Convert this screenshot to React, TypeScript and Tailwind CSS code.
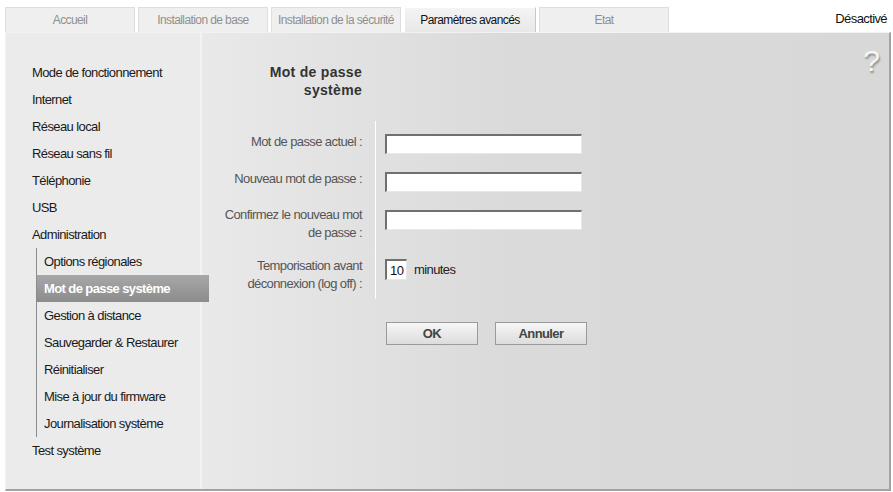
import React from 'react';

const tabs = [
  { label: 'Accueil', active: false },
  { label: 'Installation de base', active: false },
  { label: 'Installation de la sécurité', active: false },
  { label: 'Paramètres avancés', active: true },
  { label: 'Etat', active: false },
];

const mainMenu = [
  'Mode de fonctionnement',
  'Internet',
  'Réseau local',
  'Réseau sans fil',
  'Téléphonie',
  'USB',
  'Administration',
];

const adminMenu = [
  'Options régionales',
  'Mot de passe système',
  'Gestion à distance',
  'Sauvegarder & Restaurer',
  'Réinitialiser',
  'Mise à jour du firmware',
  'Journalisation système',
];

function PasswordField() {
  return (
    <input
      type="password"
      className="w-[197px] h-[20px] bg-white border-t-2 border-l-2 border-r border-b border-t-[#707070] border-l-[#707070] border-r-[#e8e8e8] border-b-[#e8e8e8] outline-none"
    />
  );
}

export default function App() {
  const current = 'Mot de passe système';

  return (
    <div className="w-[893px] h-[492px] bg-white overflow-hidden font-['Liberation_Sans',sans-serif] text-[13px] tracking-[-0.6px] whitespace-nowrap">
      {/* onglets */}
      <div className="flex items-end h-[32px] pl-[5px]">
        <div className="flex gap-[3px]">
          {tabs.map((t) =>
            t.active ? (
              <div
                key={t.label}
                className="w-[132px] h-[25px] flex items-center justify-center bg-gradient-to-b from-[#f4f4f4] to-[#e8e8e8] border-t border-l border-white border-r border-r-[#c8c8c8] text-[12px] text-[#111]"
              >
                {t.label}
              </div>
            ) : (
              <div
                key={t.label}
                className="w-[130px] h-[25px] flex items-center justify-center bg-[#efefef] border border-b-0 border-[#dedede] text-[12px] text-[#8f8f8f]"
              >
                {t.label}
              </div>
            )
          )}
        </div>
        <div className="ml-auto self-start pt-[9px] pr-[6px] text-[#111]">Désactivé</div>
      </div>

      {/* panneau principal */}
      <div className="ml-[5px] w-[886px] h-[459px] flex border-t border-l border-t-[#f2f2f2] border-l-[#f2f2f2] border-r-2 border-b-2 border-r-[#a2a2a2] border-b-[#a2a2a2] bg-[#d8d8d8]">
        {/* menu latéral */}
        <div className="relative z-10 w-[196px] shrink-0 bg-[#ebebeb] border-r-2 border-[#f3f3f3] pt-[26px] text-[#1a1a1a]">
          {mainMenu.map((m) => (
            <div key={m} className="h-[27px] flex items-center pl-[26px]">
              {m}
            </div>
          ))}
          <div className="ml-[30px] border-l border-[#8c8c8c]">
            {adminMenu.map((m) =>
              m === current ? (
                <div
                  key={m}
                  className="h-[27px] flex items-center pl-[7px] w-[172px] bg-gradient-to-b from-[#a8a8a8] to-[#8c8c8c] text-white font-bold"
                >
                  {m}
                </div>
              ) : (
                <div key={m} className="h-[27px] flex items-center pl-[7px]">
                  {m}
                </div>
              )
            )}
          </div>
          <div className="h-[27px] flex items-center pl-[26px]">Test système</div>
        </div>

        {/* contenu */}
        <div className="relative flex-1 bg-gradient-to-r from-[#e9e9e9] via-[#dadada] via-45% to-[#d8d8d8]">
          <div className="absolute right-[9px] top-[13px] text-[30px] leading-none text-[#f6f6f6] tracking-normal [text-shadow:1px_2px_2px_#8a8a8a]">
            ?
          </div>

          <div className="w-[160px] pt-[30px] text-right font-bold text-[14px] leading-[18px] text-[#333] tracking-[0.3px]">
            Mot de passe
            <br />
            système
          </div>

          <div className="flex mt-[22px]">
            <div className="w-[174px] border-r border-white text-right pr-[13px] text-[#555] pt-[12px] pb-[6px] leading-[18px]">
              <div className="h-[37px]">Mot de passe actuel :</div>
              <div className="h-[36px]">Nouveau mot de passe :</div>
              <div className="h-[51px]">
                Confirmez le nouveau mot
                <br />
                de passe :
              </div>
              <div className="h-[36px]">
                Temporisation avant
                <br />
                déconnexion (log off) :
              </div>
            </div>

            <div className="pl-[9px] pt-[13px]">
              <div className="flex flex-col gap-[18px]">
                <PasswordField />
                <PasswordField />
                <PasswordField />
              </div>
              <div className="flex items-center gap-[7px] mt-[29px]">
                <input
                  type="text"
                  defaultValue="10"
                  className="w-[22px] h-[21px] pl-[3px] bg-white text-[13px] text-[#111] border-t-2 border-l-2 border-r border-b border-t-[#707070] border-l-[#707070] border-r-[#e8e8e8] border-b-[#e8e8e8] outline-none"
                />
                <span className="text-[#222]">minutes</span>
              </div>
            </div>
          </div>

          <div className="flex gap-[17px] ml-[184px] mt-[23px]">
            <button className="w-[92px] h-[23px] bg-gradient-to-b from-[#f7f7f7] to-[#dcdcdc] border border-[#9a9a9a] text-[#444] font-bold text-[13px]">
              OK
            </button>
            <button className="w-[92px] h-[23px] bg-gradient-to-b from-[#f7f7f7] to-[#dcdcdc] border border-[#9a9a9a] text-[#444] font-bold text-[13px]">
              Annuler
            </button>
          </div>
        </div>
      </div>
    </div>
  );
}
